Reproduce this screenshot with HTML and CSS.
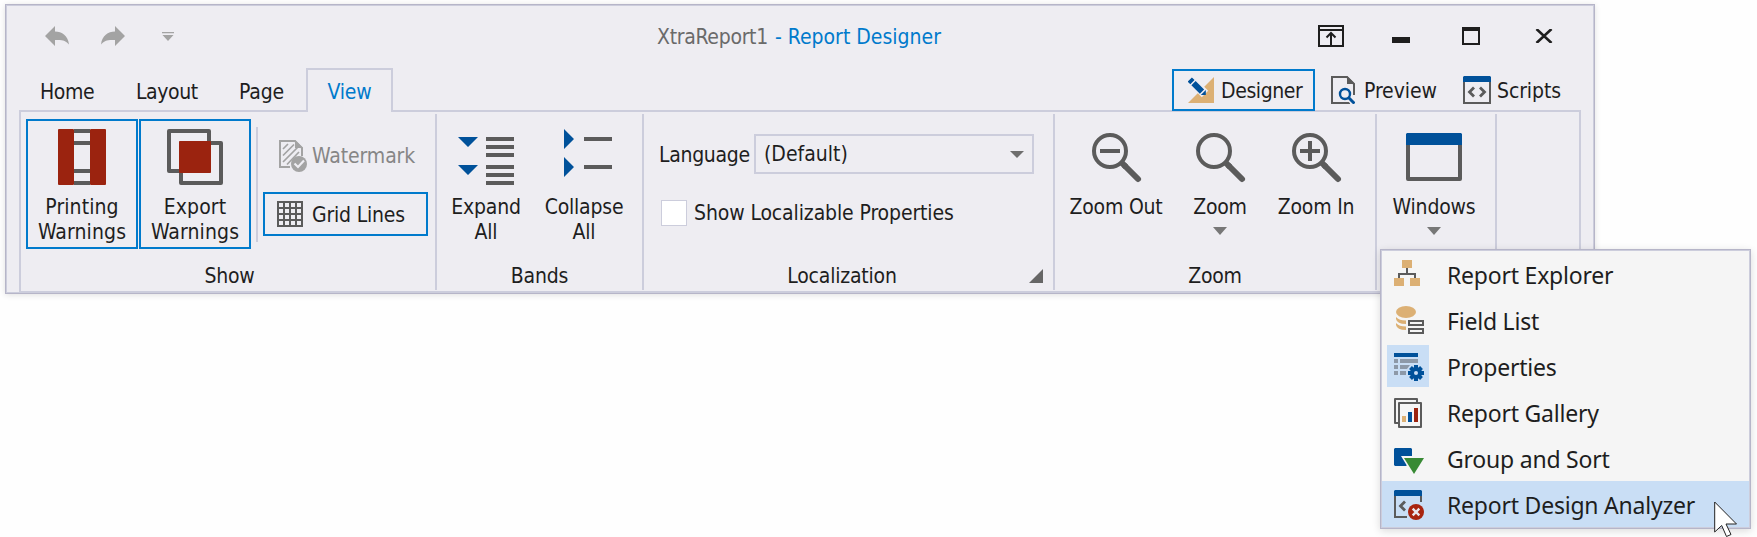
FILE: index.html
```html
<!DOCTYPE html>
<html lang="en">
<head>
<meta charset="utf-8">
<title>XtraReport1 - Report Designer</title>
<link rel="stylesheet" href="styles.css">
</head>
<body>
<div class="window">
  <header class="titlebar">
    <div class="quick">
      <svg width="24" height="20" viewBox="0 0 24 20"><path fill="#a3a3a3" d="M0 10 10 0v5.500c7 0 13 4 14 13-3-4-7-5-14-4.500v6z"/></svg>
      <svg width="24" height="20" viewBox="0 0 24 20"><path fill="#a3a3a3" d="M24 10 14 0v5.500c-7 0-13 4-14 13 3-4 7-5 14-4.500v6z"/></svg>
      <svg class="quick-more" width="12" height="9" viewBox="0 0 12 9"><path fill="#a3a3a3" d="M0 0h12v1.300H0zM.5 3h11L6 9z"/></svg>
    </div>
    <div class="title"><span class="doc">XtraReport1</span><span class="app">- Report Designer</span></div>
    <div class="controls">
      <svg width="26" height="22" viewBox="0 0 26 22"><path fill="none" stroke="#1e1e1e" stroke-width="2" d="M1 1h24v20H1zM1 5h24M13 20V8M8.500 12.500 13 8l4.500 4.500"/></svg>
      <svg class="minimize" width="18" height="6"><rect width="18" height="6" fill="#1e1e1e"/></svg>
      <svg class="maximize" width="18" height="18"><path fill="#1e1e1e" fill-rule="evenodd" d="M0 0h18v18H0zM2 4v12h14V4z"/></svg>
      <svg class="close" width="18" height="14" viewBox="0 0 18 14"><path fill="none" stroke="#1e1e1e" stroke-width="2.600" d="M1.500 0 16.500 14M16.500 0 1.500 14"/></svg>
    </div>
  </header>

  <nav class="tabs">
    <span class="tab home">Home</span>
    <span class="tab layout">Layout</span>
    <span class="tab page">Page</span>
    <span class="tab active">View</span>
    <div class="modes">
      <span class="mode selected">
        <svg width="26" height="26" viewBox="0 0 26 26"><path fill="#dcb074" d="M26 0v26H0z"/><path stroke="#eeedf2" stroke-width="9" d="M3 3l14 14"/><path stroke="#00519a" stroke-width="6" d="M1.800 2.500l2.600 2.600M5.500 6.200l8.500 8.500"/><path fill="#00519a" d="M17.800 13v5H12.800z"/></svg><span>Designer</span></span>
      <span class="mode preview">
        <svg width="24" height="28" viewBox="0 0 24 28"><path fill="none" stroke="#5b5b5b" stroke-width="2" d="M23 19V8L16 1H1v26h18"/><path fill="#5b5b5b" d="M16 0l8 8h-8z"/><circle cx="14" cy="18" r="7.500" fill="#eeedf2"/><path stroke="#eeedf2" stroke-width="6" d="M17 21l7 7"/><circle cx="14" cy="18" r="5" fill="none" stroke="#00519a" stroke-width="2.400"/><path stroke="#00519a" stroke-width="3" d="M17.500 21.500 23.500 27.500"/></svg><span>Preview</span></span>
      <span class="mode scripts">
        <svg width="28" height="28" viewBox="0 0 28 28"><path fill="none" stroke="#5b5b5b" stroke-width="2" d="M1 4v23h26V4"/><path fill="#00519a" d="M1 0h26l1 1v5H0V1z"/><path fill="none" stroke="#5b5b5b" stroke-width="2.800" d="M11 11.500 6.500 16l4.500 4.500M17 11.500l4.500 4.500-4.500 4.500"/></svg><span>Scripts</span></span>
    </div>
  </nav>

  <main class="ribbon">
    <section class="group show">
      <div class="content">
        <button class="big checked"><svg width="56" height="56" viewBox="0 0 56 56"><path fill="#5b5b5b" d="M20 0h16v4H20zM20 12h16v4H20zM20 40h16v4H20zM20 52h16v4H20z"/><rect x="4" width="16" height="56" rx="1" fill="#9b230f"/><rect x="36" width="16" height="56" rx="1" fill="#9b230f"/></svg><span>Printing</span><span>Warnings</span></button>
        <button class="big checked"><svg width="56" height="56" viewBox="0 0 56 56"><path fill="none" stroke="#5b5b5b" stroke-width="4" stroke-linejoin="round" d="M2 2h40v40H2zM14 14h40v40H14z"/><rect x="12" y="12" width="32" height="32" rx="1" fill="#9b230f"/></svg><span>Export</span><span>Warnings</span></button>
        <i class="divider"></i>
        <div class="stack">
          <div class="small disabled"><svg width="28" height="32" viewBox="0 0 28 32"><path fill="none" stroke="#a3a3a3" stroke-width="2" d="M11 27H1V1h15l7 7v8"/><path fill="#a3a3a3" d="M16 0l8 8h-8z"/><path stroke="#a3a3a3" stroke-width="1.700" d="M4 9l5-5M4 15.500 15 4.500M4 22 19 7M8 24.500 20 12"/><circle cx="20" cy="24" r="8" fill="#a3a3a3"/><path fill="none" stroke="#eeedf2" stroke-width="2.200" d="M15.500 23.500l3.500 3.500 6-6.500"/></svg><span>Watermark</span></div>
          <div class="small checked"><svg width="26" height="26" viewBox="0 0 26 26"><path fill="none" stroke="#5b5b5b" stroke-width="2" d="M1 1h24v24H1zM7 0v26M13 0v26M19 0v26M0 7h26M0 13h26M0 19h26"/></svg><span>Grid Lines</span></div>
        </div>
      </div>
      <div class="caption">Show</div>
    </section>

    <section class="group bands">
      <div class="content">
        <button class="big"><svg width="56" height="56" viewBox="0 0 56 56"><path fill="#00519a" d="M0 8h20L10 18zM0 36h20L10 46z"/><path stroke="#5b5b5b" stroke-width="4" d="M28 10h28M28 18h28M28 26h28M28 38h28M28 46h28M28 54h28"/></svg><span>Expand</span><span>All</span></button>
        <button class="big"><svg width="56" height="56" viewBox="0 0 56 56"><path fill="#00519a" d="M8 0l10 10L8 20zM8 28l10 10L8 48z"/><path stroke="#5b5b5b" stroke-width="4" d="M28 10h28M28 38h28"/></svg><span>Collapse</span><span>All</span></button>
      </div>
      <div class="caption">Bands</div>
    </section>

    <section class="group localization">
      <div class="content">
        <div class="language"><span>Language</span><div class="combo"><span>(Default)</span><svg width="14" height="7"><path fill="#6e6e6e" d="M0 0h14L7 7z"/></svg></div></div>
        <div class="check"><i class="box"></i><span>Show Localizable Properties</span></div>
      </div>
      <div class="caption">Localization<svg width="14" height="14"><path fill="#666" d="M14 0v14H0z"/></svg></div>
    </section>

    <section class="group zoom">
      <div class="content">
        <button class="big"><svg width="56" height="56" viewBox="0 0 56 56"><circle cx="22" cy="22" r="16" fill="none" stroke="#5b5b5b" stroke-width="4"/><path stroke="#5b5b5b" stroke-width="6" d="M33 33l5 5"/><path stroke="#5b5b5b" stroke-width="6" stroke-linecap="round" d="M37 37l13 13"/><path stroke="#5b5b5b" stroke-width="4" d="M12 22h20"/></svg><span>Zoom Out</span></button>
        <button class="big"><svg width="56" height="56" viewBox="0 0 56 56"><circle cx="22" cy="22" r="16" fill="none" stroke="#5b5b5b" stroke-width="4"/><path stroke="#5b5b5b" stroke-width="6" d="M33 33l5 5"/><path stroke="#5b5b5b" stroke-width="6" stroke-linecap="round" d="M37 37l13 13"/></svg><span>Zoom</span><svg class="drop" width="14" height="8"><path fill="#777" d="M0 0h14L7 8z"/></svg></button>
        <button class="big"><svg width="56" height="56" viewBox="0 0 56 56"><circle cx="22" cy="22" r="16" fill="none" stroke="#5b5b5b" stroke-width="4"/><path stroke="#5b5b5b" stroke-width="6" d="M33 33l5 5"/><path stroke="#5b5b5b" stroke-width="6" stroke-linecap="round" d="M37 37l13 13"/><path stroke="#5b5b5b" stroke-width="4" d="M12 22h20M22 12v20"/></svg><span>Zoom In</span></button>
      </div>
      <div class="caption">Zoom</div>
    </section>

    <section class="group windows">
      <div class="content">
        <button class="big"><svg width="56" height="56" viewBox="0 0 56 56"><path fill="none" stroke="#5b5b5b" stroke-width="4" stroke-linejoin="round" d="M2 12v38h52V12"/><path fill="#00519a" d="M1 4h54l1 1v11H0V5z"/></svg><span>Windows</span><svg class="drop" width="14" height="8"><path fill="#777" d="M0 0h14L7 8z"/></svg></button>
      </div>
    </section>
  </main>
</div>

<ul class="menu">
  <li><i><svg width="30" height="30" viewBox="0 0 30 30"><path fill="none" stroke="#5b5b5b" stroke-width="2" d="M13 8v6M5 18v-4h16v4"/><path fill="#dcb074" d="M8 0h10v8H8zM0 18h10v8H0zM16 18h10v8H16z"/></svg></i><span>Report Explorer</span></li>
  <li><i><svg width="30" height="30" viewBox="0 0 30 30"><ellipse cx="12" cy="6" rx="10" ry="6" fill="#dcb074"/><path fill="#dcb074" d="M2 11q3 3.500 10 3.500v3.500Q3 18 2 13zM2 17q3 3.500 10 3.500v3.500Q3 24 2 19z"/><path fill="none" stroke="#5b5b5b" stroke-width="2" d="M15 15h14v4H15zM15 23h14v4H15z"/></svg></i><span>Field List</span></li>
  <li><i class="on"><svg width="30" height="30" viewBox="0 0 30 30"><path fill="#00519a" d="M0 1h24v4H0z"/><path fill="#8d99a8" d="M0 7h4v4H0zM6 7h18v4H6zM0 13h4v4H0zM6 13h10l-3 4H6zM0 19h4v4H0zM6 19h6v4H6z"/><path stroke="#00519a" stroke-width="4" d="M22 13v16M14 21h16M16.500 15.500l11 11M27.500 15.500l-11 11"/><circle cx="22" cy="21" r="6" fill="#00519a"/><circle cx="22" cy="21" r="2" fill="#c9def5"/></svg></i><span>Properties</span></li>
  <li><i><svg width="30" height="30" viewBox="0 0 30 30"><path fill="none" stroke="#5b5b5b" stroke-width="2" stroke-linejoin="round" d="M4 25H1V1h22v3M5 5h22v24H5z"/><path fill="#dcb074" d="M8 18h4v6H8z"/><path fill="#00519a" d="M14 14h4v10h-4z"/><path fill="#9b230f" d="M20 10h4v14h-4z"/></svg></i><span>Report Gallery</span></li>
  <li><i><svg width="30" height="30" viewBox="0 0 30 30"><path fill="#00519a" d="M1 4h16l1 1v7H7l5.500 9v1H1l-1-1V5z"/><path fill="#388a34" d="M10 14h20L20 30z"/></svg></i><span>Group and Sort</span></li>
  <li class="hover"><i><svg width="30" height="30" viewBox="0 0 30 30"><path fill="none" stroke="#5b5b5b" stroke-width="2" d="M1 5v22h12M27 6v6"/><path fill="#00519a" d="M1 0h26l1 1v5H0V1z"/><path fill="none" stroke="#5b5b5b" stroke-width="2.800" d="M11 11.500 6.500 16l4.500 4.500"/><circle cx="22" cy="22" r="8" fill="#a8240f"/><path stroke="#e8e8ee" stroke-width="2.400" d="M18.700 18.700l6.600 6.600M25.300 18.700l-6.600 6.600"/></svg></i><span>Report Design Analyzer</span></li>
</ul>

<svg class="cursor" width="25" height="37" viewBox="0 0 25 37"><path fill="#fff" stroke="#222" stroke-width="1" d="M.7 1v30l7-6.500 4.800 11 4.500-2-5-10.500h10.500z"/></svg>
</body>
</html>
```
FILE: styles.css
```css
* { box-sizing: border-box; }

body {
  margin: 0;
  padding: 4px 0 0 5px;
  height: 537px;
  overflow: hidden;
  background: #fefefe;
  color: #1e1e1e;
  font: 21px/25px "DejaVu Sans Condensed", "DejaVu Sans", sans-serif;
  letter-spacing: -0.2px;
}

svg { display: block; flex: none; }

.window {
  display: flex;
  flex-direction: column;
  width: 1590px;
  height: 290px;
  border: 1px solid #b6b5c8;
  background: #eeedf2;
  box-shadow: inset 0 0 0 1px #cccddc, 0 1px 6px rgba(0, 0, 0, .12);
}

.titlebar {
  display: flex;
  height: 63px;
  padding: 0 41px 0 39px;
}

.quick { display: flex; gap: 32px; width: 612px; padding-top: 21px; }
.quick-more { margin: 6px 0 0 5px; }

.title { display: flex; gap: 7px; padding-top: 20px; color: #6a6a6a; white-space: nowrap; }
.doc { letter-spacing: -0.3px; }
.title .app { color: #007acc; letter-spacing: 0; }

.controls { display: flex; margin-left: auto; padding-top: 20px; }
.minimize { margin: 12px 0 0 48px; }
.maximize { margin: 2px 0 0 52px; }
.close { margin: 4px 0 0 55px; }

.tabs {
  display: flex;
  height: 44px;
  margin: 0 13px -2px;
}

.tab { padding-top: 12px; }
.home { margin-left: 21px; width: 96px; letter-spacing: -0.4px; }
.layout { width: 103px; letter-spacing: -0.4px; }
.page { width: 67px; }
.active {
  position: relative;
  width: 87px;
  padding: 10px 0 0;
  border: 2px solid #cccddc;
  border-bottom: 0;
  background: #eeedf2;
  color: #007acc;
  text-align: center;
}

.modes { position: relative; display: flex; margin-left: auto; padding-top: 1px; }
.mode { display: flex; align-items: center; height: 42px; letter-spacing: -0.1px; }
.mode span { padding-top: 2px; }
.mode.selected { width: 143px; padding-left: 14px; gap: 7px; border: 2px solid #007acc; background: #eeedf2; letter-spacing: -0.4px; }
.preview { width: 148px; padding-left: 16px; gap: 9px; }
.scripts { width: 118px; gap: 6px; }

.ribbon {
  display: flex;
  height: 182px;
  width: 1562px;
  margin-left: 13px;
  padding-top: 2px;
  border: 2px solid #cccddc;
  border-bottom-width: 1px;
}

.group {
  display: flex;
  flex-direction: column;
  height: 176px;
  border-right: 2px solid #cccddc;
}

.content { display: flex; height: 149px; padding-top: 5px; }
.caption { padding-top: 1px; text-align: center; }

.show { width: 416px; }
.bands { width: 207px; }
.localization { width: 411px; }
.zoom { width: 322px; }
.windows { width: 120px; }

.big {
  display: flex;
  flex-direction: column;
  align-items: center;
  height: 130px;
  padding: 10px 0 0;
  border: 0;
  background: none;
  color: inherit;
  font: inherit;
  letter-spacing: inherit;
  white-space: nowrap;
}
.big svg:first-child { margin-bottom: 10px; }
.big .drop { margin-top: 7px; }
.checked { border: 2px solid #007acc; }

.show .content { padding-left: 5px; }
.show .big { width: 112px; margin-right: 1px; padding-top: 8px; letter-spacing: 0.1px; }
.show .caption { padding-left: 3px; }
.divider { width: 2px; height: 115px; margin: 8px 5px 0 4px; background: #cccddc; }
.stack { display: flex; flex-direction: column; gap: 14px; padding-top: 15px; }
.small { display: flex; align-items: center; width: 165px; height: 44px; }
.small.disabled { padding-left: 16px; gap: 5px; color: #868686; letter-spacing: -0.1px; }
.small.checked { padding-left: 12px; gap: 9px; }
.small.checked span { padding-top: 2px; }

.bands .big { width: 98px; }
.bands .content { justify-content: center; padding-right: 9px; }

.localization .content { flex-direction: column; padding: 20px 0 0 15px; }
.language { display: flex; align-items: center; letter-spacing: -0.3px; }
.language > span { width: 95px; padding-top: 2px; }
.combo {
  display: flex;
  align-items: center;
  justify-content: space-between;
  width: 280px;
  height: 40px;
  padding: 0 8px 0 8px;
  border: 2px solid #cccddc;
  letter-spacing: 0;
}
.check { display: flex; align-items: center; gap: 7px; margin: 25px 0 0 2px; letter-spacing: -0.12px; }
.check span { padding-top: 2px; }
.box { width: 26px; height: 26px; border: 1px solid #cccddc; background: #fff; }
.localization .caption { position: relative; padding-right: 13px; }
.caption svg { position: absolute; right: 10px; bottom: 6px; }

.zoom .content { padding-left: 5px; }
.zoom .big { width: 112px; }
.zoom .big:nth-child(2) { width: 96px; }
.zoom .big:nth-child(3) { width: 96px; }

.windows .content { justify-content: center; padding-right: 4px; }

.menu {
  position: absolute;
  left: 1380px;
  top: 249px;
  width: 371px;
  height: 280px;
  margin: 0;
  padding: 1px;
  list-style: none;
  border: 1px solid #b6b5c8;
  background: #f5f5f5;
  box-shadow: inset 0 0 0 1px #cccddc, 0 2px 8px rgba(0, 0, 0, .14);
  font: 23px/46px "Noto Sans", sans-serif;
  letter-spacing: -0.22px;
}
.menu li { display: flex; align-items: center; gap: 18px; height: 46px; padding-left: 5px; }
.menu span { padding-top: 2px; }
.menu i { display: grid; place-items: center; width: 42px; height: 42px; padding: 2px 0 0 2px; }
.menu .on, .menu .hover { background: #c9def5; }

.cursor { position: absolute; left: 1714px; top: 501px; }
```
